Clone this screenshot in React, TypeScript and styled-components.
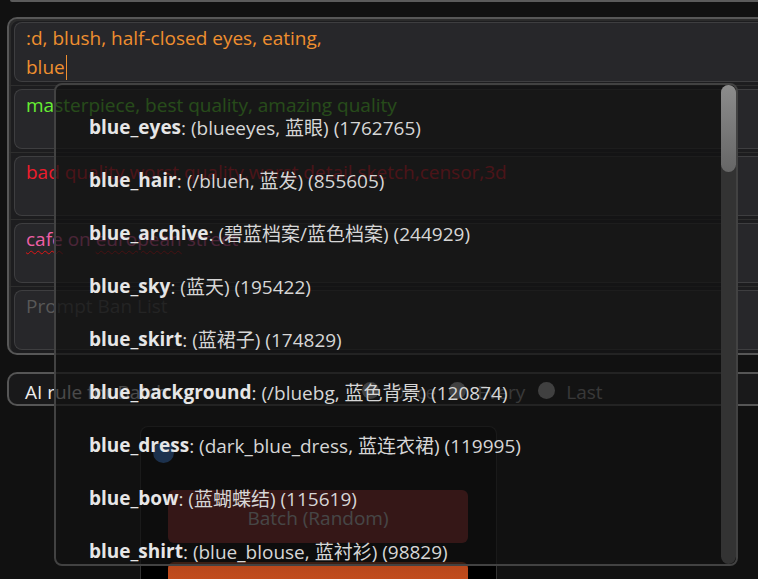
import React from "react";
import styled, { createGlobalStyle } from "styled-components";

const Global = createGlobalStyle`
  html, body { margin: 0; padding: 0; background: #111111; overflow: hidden; }
  body { font-family: "Open Sans", "Noto Sans", "Noto Sans CJK SC", sans-serif; }
`;

const Page = styled.div`
  position: relative;
  width: 800px;
  height: 579px;
  overflow: hidden;
  padding-left: 7px;
  box-sizing: border-box;
  display: flex;
  flex-direction: column;
  font-size: 19px;
  & > * {
    flex-shrink: 0;
  }
`;

const PrevEdge = styled.div`
  height: 2px;
  margin-left: 3px;
  background: #5b5b5b;
  border-bottom-left-radius: 2px;
`;

const PromptPanel = styled.section`
  margin-top: 15px;
  border: 2px solid #575757;
  border-right: none;
  border-radius: 10px 0 0 10px;
  background: #1d1d1f;
  box-shadow: inset 2px 2px 0 #2b2b2b;
  display: flex;
  flex-direction: column;
`;

const Block = styled.div`
  padding: 3px 0 3px 5px;
  & + & {
    border-top: 1px solid #2e2e2e;
  }
`;

const PromptBox = styled.div<{ $color: string }>`
  height: 60px;
  box-sizing: border-box;
  border: 1px solid #3e3e40;
  border-right: none;
  border-radius: 8px 0 0 8px;
  background: #27272a;
  padding: 1px 11px 0;
  color: ${(p) => p.$color};
  font-size: 19px;
  line-height: 29px;
  white-space: pre-wrap;
`;

const Caret = styled.span`
  display: inline-block;
  width: 1px;
  height: 25px;
  margin-left: 1px;
  vertical-align: -6px;
  background: #ef8f2f;
`;

const Misspelled = styled.span`
  text-decoration: underline wavy #e01515;
  text-decoration-thickness: 1px;
  text-underline-offset: 4px;
`;

const RuleRow = styled.div`
  margin-top: 17px;
  height: 34px;
  box-sizing: border-box;
  border: 2px solid #565656;
  border-right: none;
  border-radius: 10px 0 0 10px;
  background: #19191a;
  display: flex;
  align-items: center;
  padding: 6px 0 0 16px;
`;

const RuleLabel = styled.span`
  width: 337px;
  color: #ececec;
  font-size: 19px;
`;

const RadioGroup = styled.div`
  display: flex;
  align-items: center;
  gap: 13px;
`;

const RadioItem = styled.label`
  display: flex;
  align-items: center;
  gap: 11px;
  color: #a6a6a6;
  font-size: 19px;
`;

const RadioDot = styled.span`
  width: 17px;
  height: 17px;
  margin-top: -4px;
  border-radius: 50%;
  background: #c4c4c4;
`;

const BatchCard = styled.div`
  margin-top: 20px;
  margin-left: 133px;
  width: 357px;
  height: 200px;
  box-sizing: border-box;
  border: 1px solid #333333;
  border-bottom: none;
  border-radius: 8px 8px 0 0;
  background: #000000;
  padding: 15px 0 0 12px;
  display: flex;
  flex-direction: column;
  align-items: flex-start;
`;

const Toggle = styled.span`
  width: 21px;
  height: 21px;
  border-radius: 50%;
  background: #3d8bf5;
`;

const ActionButton = styled.button<{ $variant: "red" | "orange" }>`
  flex-shrink: 0;
  margin-left: 15px;
  width: 300px;
  height: 53px;
  padding-top: 4px;
  border: none;
  border-radius: 6px;
  font-family: inherit;
  font-size: 19px;
  color: #dddddd;
  background: ${(p) =>
    p.$variant === "red" ? "#9b2828" : "linear-gradient(#b6461b, #d9581f)"};
  margin-top: ${(p) => (p.$variant === "red" ? "27px" : "19px")};
`;

const Suggest = styled.div`
  position: absolute;
  left: 54px;
  top: 83px;
  width: 684px;
  height: 483px;
  box-sizing: border-box;
  border: 2px solid #424242;
  border-radius: 8px;
  background: rgba(17, 17, 17, 0.74);
  display: flex;
  overflow: hidden;
`;

const SuggestList = styled.ul`
  flex: 1;
  margin: 0;
  padding: 15px 0 0 33px;
  list-style: none;
`;

const SuggestItem = styled.li`
  height: 53px;
  display: flex;
  align-items: center;
  color: #d6d6d6;
  font-size: 19px;
  white-space: pre;
`;

const TagName = styled.b`
  color: #e6e6e6;
  font-weight: 700;
`;

const Track = styled.div`
  width: 15px;
  background: #333333;
  border-radius: 8px;
  display: flex;
  flex-direction: column;
`;

const Thumb = styled.div`
  height: 87px;
  border-radius: 8px;
  background: linear-gradient(#8c8c8c, #666666);
`;

const suggestions = [
  ["blue_eyes", "(blueeyes, 蓝眼) (1762765)"],
  ["blue_hair", "(/blueh, 蓝发) (855605)"],
  ["blue_archive", "(碧蓝档案/蓝色档案) (244929)"],
  ["blue_sky", "(蓝天) (195422)"],
  ["blue_skirt", "(蓝裙子) (174829)"],
  ["blue_background", "(/bluebg, 蓝色背景) (120874)"],
  ["blue_dress", "(dark_blue_dress, 蓝连衣裙) (119995)"],
  ["blue_bow", "(蓝蝴蝶结) (115619)"],
  ["blue_shirt", "(blue_blouse, 蓝衬衫) (98829)"],
];

export default function App() {
  return (
    <>
      <Global />
      <Page>
        <PrevEdge />
        <PromptPanel>
          <Block>
            <PromptBox $color="#ef8f2f">
              {":d, blush, half-closed eyes, eating,\nblue"}
              <Caret />
            </PromptBox>
          </Block>
          <Block>
            <PromptBox $color="#66ee33">masterpiece, best quality, amazing quality</PromptBox>
          </Block>
          <Block>
            <PromptBox $color="#ee1c2c">
              bad quality,worst quality,worst detail,sketch,censor,3d
            </PromptBox>
          </Block>
          <Block>
            <PromptBox $color="#ee5fa6">
              <Misspelled>cafe</Misspelled> on <Misspelled>european</Misspelled> street
            </PromptBox>
          </Block>
          <Block>
            <PromptBox $color="#585858">Prompt Ban List</PromptBox>
          </Block>
        </PromptPanel>
        <RuleRow>
          <RuleLabel>AI rule for Batch</RuleLabel>
          <RadioGroup>
            <RadioItem>
              <RadioDot />
              Once
            </RadioItem>
            <RadioItem>
              <RadioDot />
              Every
            </RadioItem>
            <RadioItem>
              <RadioDot />
              Last
            </RadioItem>
          </RadioGroup>
        </RuleRow>
        <BatchCard>
          <Toggle />
          <ActionButton $variant="red">Batch (Random)</ActionButton>
          <ActionButton $variant="orange">Generate</ActionButton>
        </BatchCard>
        <Suggest>
          <SuggestList>
            {suggestions.map(([name, rest]) => (
              <SuggestItem key={name}>
                <TagName>{name}</TagName>: {rest}
              </SuggestItem>
            ))}
          </SuggestList>
          <Track>
            <Thumb />
          </Track>
        </Suggest>
      </Page>
    </>
  );
}
